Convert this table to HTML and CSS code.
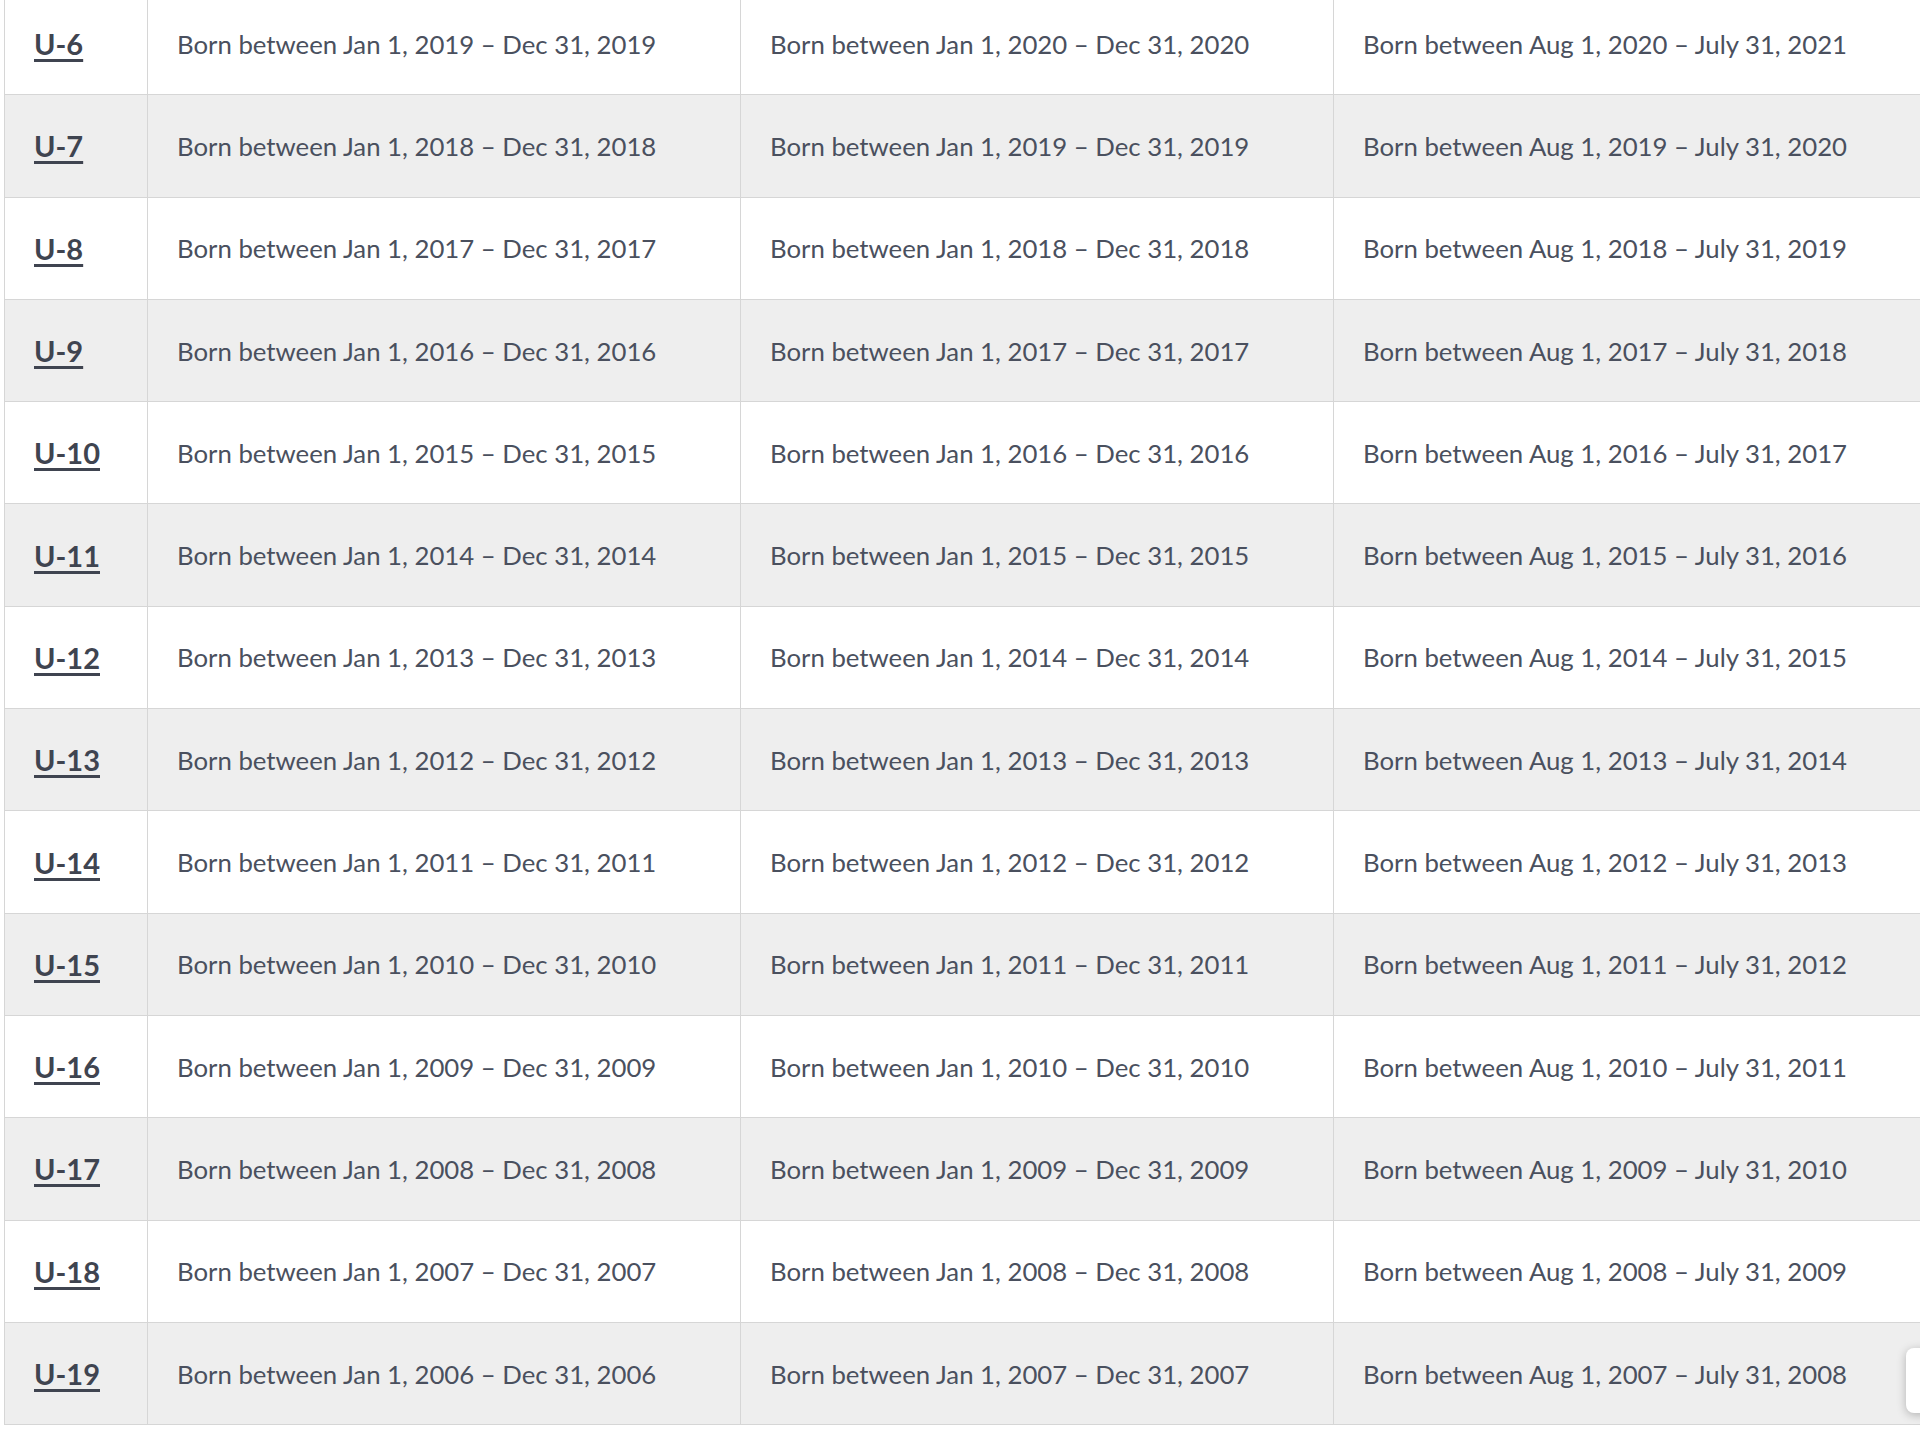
FILE: index.html
```html
<!DOCTYPE html>
<html lang="en">
<head>
    <meta charset="UTF-8">
    <meta name="viewport" content="width=device-width, initial-scale=1.0">
    <title>Age Groups</title>
    <link rel="stylesheet" href="styles.css">
</head>
<body>
    <main class="page">
        <table class="ageTable">
            <colgroup>
                <col class="colGroup">
                <col class="colYear">
                <col class="colYear">
                <col class="colYearWide">
            </colgroup>
            <tbody>
                <tr>
                    <td><a href="#">U-6</a></td>
                    <td>Born between Jan 1, 2019 – Dec 31, 2019</td>
                    <td>Born between Jan 1, 2020 – Dec 31, 2020</td>
                    <td>Born between Aug 1, 2020 – July 31, 2021</td>
                </tr>
                <tr>
                    <td><a href="#">U-7</a></td>
                    <td>Born between Jan 1, 2018 – Dec 31, 2018</td>
                    <td>Born between Jan 1, 2019 – Dec 31, 2019</td>
                    <td>Born between Aug 1, 2019 – July 31, 2020</td>
                </tr>
                <tr>
                    <td><a href="#">U-8</a></td>
                    <td>Born between Jan 1, 2017 – Dec 31, 2017</td>
                    <td>Born between Jan 1, 2018 – Dec 31, 2018</td>
                    <td>Born between Aug 1, 2018 – July 31, 2019</td>
                </tr>
                <tr>
                    <td><a href="#">U-9</a></td>
                    <td>Born between Jan 1, 2016 – Dec 31, 2016</td>
                    <td>Born between Jan 1, 2017 – Dec 31, 2017</td>
                    <td>Born between Aug 1, 2017 – July 31, 2018</td>
                </tr>
                <tr>
                    <td><a href="#">U-10</a></td>
                    <td>Born between Jan 1, 2015 – Dec 31, 2015</td>
                    <td>Born between Jan 1, 2016 – Dec 31, 2016</td>
                    <td>Born between Aug 1, 2016 – July 31, 2017</td>
                </tr>
                <tr>
                    <td><a href="#">U-11</a></td>
                    <td>Born between Jan 1, 2014 – Dec 31, 2014</td>
                    <td>Born between Jan 1, 2015 – Dec 31, 2015</td>
                    <td>Born between Aug 1, 2015 – July 31, 2016</td>
                </tr>
                <tr>
                    <td><a href="#">U-12</a></td>
                    <td>Born between Jan 1, 2013 – Dec 31, 2013</td>
                    <td>Born between Jan 1, 2014 – Dec 31, 2014</td>
                    <td>Born between Aug 1, 2014 – July 31, 2015</td>
                </tr>
                <tr>
                    <td><a href="#">U-13</a></td>
                    <td>Born between Jan 1, 2012 – Dec 31, 2012</td>
                    <td>Born between Jan 1, 2013 – Dec 31, 2013</td>
                    <td>Born between Aug 1, 2013 – July 31, 2014</td>
                </tr>
                <tr>
                    <td><a href="#">U-14</a></td>
                    <td>Born between Jan 1, 2011 – Dec 31, 2011</td>
                    <td>Born between Jan 1, 2012 – Dec 31, 2012</td>
                    <td>Born between Aug 1, 2012 – July 31, 2013</td>
                </tr>
                <tr>
                    <td><a href="#">U-15</a></td>
                    <td>Born between Jan 1, 2010 – Dec 31, 2010</td>
                    <td>Born between Jan 1, 2011 – Dec 31, 2011</td>
                    <td>Born between Aug 1, 2011 – July 31, 2012</td>
                </tr>
                <tr>
                    <td><a href="#">U-16</a></td>
                    <td>Born between Jan 1, 2009 – Dec 31, 2009</td>
                    <td>Born between Jan 1, 2010 – Dec 31, 2010</td>
                    <td>Born between Aug 1, 2010 – July 31, 2011</td>
                </tr>
                <tr>
                    <td><a href="#">U-17</a></td>
                    <td>Born between Jan 1, 2008 – Dec 31, 2008</td>
                    <td>Born between Jan 1, 2009 – Dec 31, 2009</td>
                    <td>Born between Aug 1, 2009 – July 31, 2010</td>
                </tr>
                <tr>
                    <td><a href="#">U-18</a></td>
                    <td>Born between Jan 1, 2007 – Dec 31, 2007</td>
                    <td>Born between Jan 1, 2008 – Dec 31, 2008</td>
                    <td>Born between Aug 1, 2008 – July 31, 2009</td>
                </tr>
                <tr>
                    <td><a href="#">U-19</a></td>
                    <td>Born between Jan 1, 2006 – Dec 31, 2006</td>
                    <td>Born between Jan 1, 2007 – Dec 31, 2007</td>
                    <td>Born between Aug 1, 2007 – July 31, 2008</td>
                </tr>
            </tbody>
        </table>

        <!-- floating widget, cut off by the window edge -->
        <div class="floatBtn"></div>
    </main>
</body>
</html>
```

FILE: styles.css
```css
html, body{
    margin: 0;
    padding: 0;
    background: #ffffff;
}

.page{
    width: 100vw;
    height: 100vh;
    overflow: hidden;
    font-family: Lato, "Open Sans", sans-serif;
    color: #4a505e;
}

.ageTable{
    table-layout: fixed;
    border-collapse: collapse;
    width: 1921px;
    margin: -8px 0 0 4px;
}

.colGroup{ width: 143px; }
.colYear{ width: 593px; }
.colYearWide{ width: 592px; }

.ageTable td{
    height: 101.3px;
    padding: 0 29px;
    border: 1px solid #d6d6d6;
    font-size: 25.75px;
    white-space: nowrap;
    vertical-align: middle;
}

.ageTable tr:nth-child(even) td{
    background: #eeeeee;
}

.ageTable a{
    color: #3f4450;
    font-size: 29px;
    font-weight: 700;
    text-decoration: underline;
    text-underline-offset: 4px;
    text-decoration-thickness: 3px;
}

.floatBtn{
    position: fixed;
    left: 1906px;
    top: 1348px;
    width: 60px;
    height: 65px;
    background: #ffffff;
    border-radius: 8px;
    box-shadow: 0 2px 10px rgba(0, 0, 0, 0.25);
}
```
